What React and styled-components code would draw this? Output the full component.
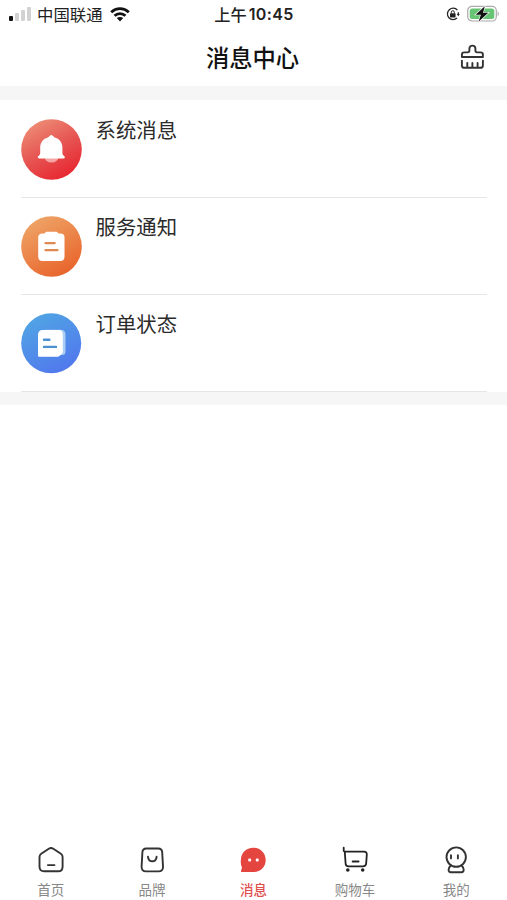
import React, { useState } from 'react';
import styled, { createGlobalStyle, css } from 'styled-components';

const GlobalStyle = createGlobalStyle`
    * {
        box-sizing: border-box;
    }

    body {
        margin: 0;
        background-color: #fff;
        font-family: "Noto Sans CJK SC", sans-serif;
    }

    svg {
        display: block;
        flex-shrink: 0;
    }
`
const center = css`
    display: flex;
    align-items: center;
`
const Page = styled.div`
    display: flex;
    flex-direction: column;
    height: 100vh;
    min-height: 900px;
    overflow: hidden;
`
const StatusBar = styled.div`
    display: grid;
    grid-template-columns: 1fr auto 1fr;
    align-items: center;
    height: 28px;
    padding: 0 8px 0 9px;
    color: #222;
`
const Carrier = styled.div`
    ${center}
    font-size: 16.4px;
    line-height: 28px;

    span {
        margin: 0 7px 0 5px;
    }
`
const Time = styled.div`
    ${center}
    font-size: 16.2px;
    font-weight: 500;
    line-height: 28px;

    b {
        margin-left: 2px;
        font-family: Inter, sans-serif;
        font-size: 16px;
        font-weight: 600;
        letter-spacing: .35px;
    }
`
const StatusIcons = styled.div`
    ${center}
    justify-content: flex-end;
    gap: 7px;
`
const Header = styled.header`
    display: grid;
    grid-template-columns: 1fr auto 1fr;
    align-items: center;
    height: 58px;
    padding: 0 22px 0 20px;
`
const Title = styled.h1`
    grid-column: 2;
    margin: 0;
    color: #111;
    font-size: 23.3px;
    font-weight: 500;
    line-height: 56px;
`
const ClearButton = styled.button`
    justify-self: end;
    padding: 0;
    border: 0;
    background: none;
    cursor: pointer;
`
const Band = styled.div`
    height: ${props => props.$height}px;
    background-color: #f6f6f6;
`
const List = styled.ul`
    margin: 0;
    padding: 0 20px 0 21px;
    list-style: none;
`
const Item = styled.li`
    display: flex;
    height: 97px;
    padding-top: 17.5px;
    border-bottom: 1px solid #e6e6e6;

    &:first-child {
        height: 98px;
        padding-top: 18.5px;
    }
`
const ItemTitle = styled.span`
    margin-left: 13.5px;
    color: #2b2b2b;
    font-size: 20.4px;
    line-height: 21px;
`
const TabBar = styled.nav`
    display: grid;
    grid-template-columns: repeat(5, 1fr);
    height: 60px;
    margin-top: auto;
`
const Tab = styled.button`
    display: flex;
    flex-direction: column;
    align-items: center;
    padding: 4.6px 0 0;
    border: 0;
    background: none;
    color: ${props => props.$active ? '#df4f50' : '#888'};
    font-family: inherit;
    font-size: 13.5px;
    font-weight: ${props => props.$active ? 500 : 400};
    line-height: 20px;
    cursor: pointer;

    span {
        margin-top: 4.4px;
    }
`

const SignalIcon = () => (
    <svg width="23" height="16" viewBox="0 0 23 16">
        <rect x="0" y="10" width="4" height="5" rx="1" fill="#111" />
        <rect x="6" y="7" width="4" height="8" rx="1" fill="#d2d2d2" />
        <rect x="12" y="4" width="4" height="11" rx="1" fill="#d2d2d2" />
        <rect x="18" y="1" width="4" height="14" rx="1" fill="#d2d2d2" />
    </svg>
)
const WifiIcon = () => (
    <svg width="20" height="15" viewBox="0 0 20 15" fill="none" stroke="#111" strokeWidth="2.8">
        <path d="M1.2 5.2C6.2.5 13.8.5 18.8 5.2" />
        <path d="M4.5 8.8c3.2-2.9 7.8-2.9 11 0" />
        <path d="M6.8 11.1c1.8-1.6 4.6-1.6 6.4 0L10 14.5z" fill="#111" stroke="none" />
    </svg>
)
const LockIcon = () => (
    <svg width="14" height="14" viewBox="0 0 14 14" fill="none" stroke="#222" strokeWidth="1.3">
        <path d="M11.4 3.1A5.7 5.7 0 1 0 11 11.1" />
        <path d="M12.3 5.3v2.2" />
        <path d="M10.8 7h3l-1.5 2.3z" fill="#222" stroke="none" />
        <rect x="4" y="6.3" width="5.6" height="4.1" rx=".7" fill="#222" stroke="none" />
        <path d="M5.3 6.5V5.2a1.5 1.5 0 0 1 3 0v1.3" strokeWidth="1" />
    </svg>
)
const BatteryIcon = () => (
    <svg width="32" height="18" viewBox="0 0 32 18">
        <rect x=".7" y="1.4" width="28.6" height="14.6" rx="4.2" fill="#fff" stroke="#aaa" strokeWidth="1.2" />
        <rect x="2.7" y="3.4" width="24.6" height="10.6" rx="2.5" fill="#67c475" />
        <path d="M30.6 6.2c1.6.8 1.6 4.2 0 5z" fill="#aaa" />
        <path d="M17.8 1.2 8.6 9.7h5.3l-2.4 7 9.8-8.9H16z" fill="#111" stroke="#fff" strokeWidth="1.2" paintOrder="stroke" />
    </svg>
)
const BrushIcon = () => (
    <svg width="25" height="26" viewBox="0 0 25 26" fill="none" stroke="#333" strokeWidth="1.9" strokeLinejoin="round" strokeLinecap="round">
        <path d="M1.9 13v-2.3c0-1.5.8-2.3 2.3-2.3h3.4c1.2 0 1.8-.7 1.8-1.8V4.6a3 3 0 0 1 6 0v2c0 1.1.6 1.8 1.8 1.8h3.4c1.5 0 2.3.8 2.3 2.3V13z" />
        <path d="M1.9 16.6v4.8c0 1.7.8 2.4 2.4 2.4h16.2c1.6 0 2.4-.7 2.4-2.4v-4.8M7.3 19v4.6M12.4 19v4.6M17.6 19v4.6" />
    </svg>
)

const BellBadge = () => (
    <svg width="61" height="61" viewBox="0 0 61 61">
        <defs>
            <linearGradient id="bell" x1=".2" y1="0" x2=".75" y2="1">
                <stop offset="0" stopColor="#ee9078" />
                <stop offset=".5" stopColor="#e65552" />
                <stop offset="1" stopColor="#e8232f" />
            </linearGradient>
        </defs>
        <circle cx="30.5" cy="30.5" r="30.3" fill="url(#bell)" />
        <path d="M23.5 38h14a7 5.5 0 0 1-14 0z" fill="#f6a5a7" />
        <path d="M18 36.4c.9-.7 1.2-1.5 1.2-2.7v-5.2c0-5.3 3.2-8.9 7.8-10.1l2.1-1.9c.8-.8 1.6-.8 2.4 0l2.1 1.9c4.6 1.2 7.8 4.8 7.8 10.1v5.2c0 1.2.3 2 1.2 2.7.8.6 1.2 1 1.2 1.8s-.4 1.2-1.1 1.2H17.9c-.7 0-1.1-.4-1.1-1.2s.4-1.2 1.2-1.8z" fill="#fff" />
    </svg>
)
const ClipboardBadge = () => (
    <svg width="61" height="61" viewBox="0 0 61 61">
        <defs>
            <linearGradient id="clipboard" x1=".2" y1="0" x2=".75" y2="1">
                <stop offset="0" stopColor="#efa669" />
                <stop offset="1" stopColor="#e86229" />
            </linearGradient>
        </defs>
        <circle cx="30.5" cy="30.5" r="30.3" fill="url(#clipboard)" />
        <path d="M21.5 17.4h2c.8-1.2 1.5-1.7 2.7-1.7h8.6c1.2 0 1.9.5 2.7 1.7h2c2.7 0 4 1.4 4 3.9v19.4c0 2.8-1.5 4.2-4.3 4.2H21.5c-2.8 0-4.3-1.4-4.3-4.2V21.3c0-2.5 1.6-3.9 4.3-3.9z" fill="#fff" />
        <path d="M24.6 27.1h9M24.6 34.1h11.8" stroke="#df8950" strokeWidth="2.4" strokeLinecap="round" />
    </svg>
)
const OrderBadge = () => (
    <svg width="61" height="61" viewBox="0 0 61 61">
        <defs>
            <linearGradient id="order" x1=".2" y1="0" x2=".75" y2="1">
                <stop offset="0" stopColor="#50a6e4" />
                <stop offset="1" stopColor="#5176ed" />
            </linearGradient>
        </defs>
        <circle cx="30.2" cy="30.3" r="30" fill="url(#order)" />
        <path d="M24 16.8h15.5c3.3 0 5 1.7 5 5v17c0 2.2-1 3.3-3.2 3.3H24z" fill="#a9cdf5" />
        <path d="M21.7 17.1h15.8c2.8 0 4.3 1.5 4.3 4.3v17c0 1.2-.3 1.8-1.1 2.5l-2 1.8c-.8.8-1.4 1-2.5 1H18.5c-1 0-1.5-.5-1.5-1.5V21.8c0-3 1.7-4.7 4.7-4.7z" fill="#fff" />
        <path d="M23 26.8h5.4M23 33.9h12" stroke="#4b91d2" strokeWidth="2.4" strokeLinecap="round" />
    </svg>
)

const tabIconProps = {
    width: 30,
    height: 30,
    viewBox: '0 0 30 30',
    fill: 'none',
    stroke: '#333',
    strokeWidth: 1.9,
    strokeLinecap: 'round',
    strokeLinejoin: 'round',
}
const HomeIcon = () => (
    <svg {...tabIconProps}>
        <path d="M3.5 11.9c0-1.5.5-2.4 1.7-3.2l7.6-5c1.6-1 2.9-1 4.5 0l7.6 5c1.2.8 1.7 1.7 1.7 3.2v9.8c0 3-1.6 4.6-4.6 4.6H8.1c-3 0-4.6-1.6-4.6-4.6z" />
        <path d="M11.9 20.1h6.6" />
    </svg>
)
const BagIcon = () => (
    <svg {...tabIconProps}>
        <path d="M9.3 3.5h12c2.6 0 3.7 1.2 3.9 3.7l.8 14.4c.1 3.2-1.4 4.8-4.4 4.8H9c-3 0-4.5-1.6-4.4-4.8l.8-14.4c.2-2.5 1.3-3.7 3.9-3.7z" />
        <path d="M11 11.8c.6 6 8 6 8.6 0" />
    </svg>
)
const MessageIcon = () => (
    <svg {...tabIconProps} stroke="none">
        <path d="M15.3 2.7c7.1 0 12.4 5.3 12.4 12.2 0 7-5.3 12.2-12.3 12.2H4c-.9 0-1.2-.7-.9-1.5l.9-3A13 13 0 0 1 2.9 15C2.9 8 8.2 2.7 15.3 2.7z" fill="#e5453f" />
        <rect x="10.2" y="13.5" width="2.9" height="2.9" rx="1" fill="#fff" />
        <rect x="17.8" y="13.5" width="2.9" height="2.9" rx="1" fill="#fff" />
    </svg>
)
const CartIcon = () => (
    <svg {...tabIconProps} stroke="#222" strokeWidth="1.8">
        <path d="M3.7 2.6v3c0 .8.4 1.1 1.2 1.1H24c2 0 2.9.9 2.8 2.8l-.6 8.7c-.2 2.4-1.1 3.2-3.4 3.2H8.6c-2 0-2.9-.9-3-2.9L4.8 6.8" />
        <path d="M12.6 16.5h6" />
        <circle cx="7.8" cy="25" r="1.8" fill="#222" stroke="none" />
        <circle cx="22.7" cy="25" r="1.8" fill="#222" stroke="none" />
    </svg>
)
const ProfileIcon = () => (
    <svg {...tabIconProps}>
        <circle cx="15.2" cy="12.1" r="9.7" />
        <path d="M9.8 20.5c-1.4 1.2-2.1 2.4-2.2 4.2 0 1.8.7 2.5 2.3 2.5h10.5c1.6 0 2.3-.7 2.3-2.5-.1-1.8-.8-3-2.2-4.2" />
        <path d="M10 10.2v3.2M16.9 10.2v3.2" />
    </svg>
)

const messages = [
    { title: '系统消息', Icon: BellBadge },
    { title: '服务通知', Icon: ClipboardBadge },
    { title: '订单状态', Icon: OrderBadge },
]

const tabs = [
    { label: '首页', Icon: HomeIcon },
    { label: '品牌', Icon: BagIcon },
    { label: '消息', Icon: MessageIcon },
    { label: '购物车', Icon: CartIcon },
    { label: '我的', Icon: ProfileIcon },
]

const App = () => {
    const [active, setActive] = useState('消息');

    return (
        <>
            <GlobalStyle />
            <Page>
                <StatusBar>
                    <Carrier>
                        <SignalIcon />
                        <span>中国联通</span>
                        <WifiIcon />
                    </Carrier>
                    <Time>上午<b>10:45</b></Time>
                    <StatusIcons>
                        <LockIcon />
                        <BatteryIcon />
                    </StatusIcons>
                </StatusBar>
                <Header>
                    <Title>消息中心</Title>
                    <ClearButton>
                        <BrushIcon />
                    </ClearButton>
                </Header>
                <Band $height={14} />
                <List>
                    {messages.map(({ title, Icon }) => (
                        <Item key={title}>
                            <Icon />
                            <ItemTitle>{title}</ItemTitle>
                        </Item>
                    ))}
                </List>
                <Band $height={13} />
                <TabBar>
                    {tabs.map(({ label, Icon }) => (
                        <Tab key={label} $active={label === active} onClick={() => setActive(label)}>
                            <Icon />
                            <span>{label}</span>
                        </Tab>
                    ))}
                </TabBar>
            </Page>
        </>
    )
}

export default App
